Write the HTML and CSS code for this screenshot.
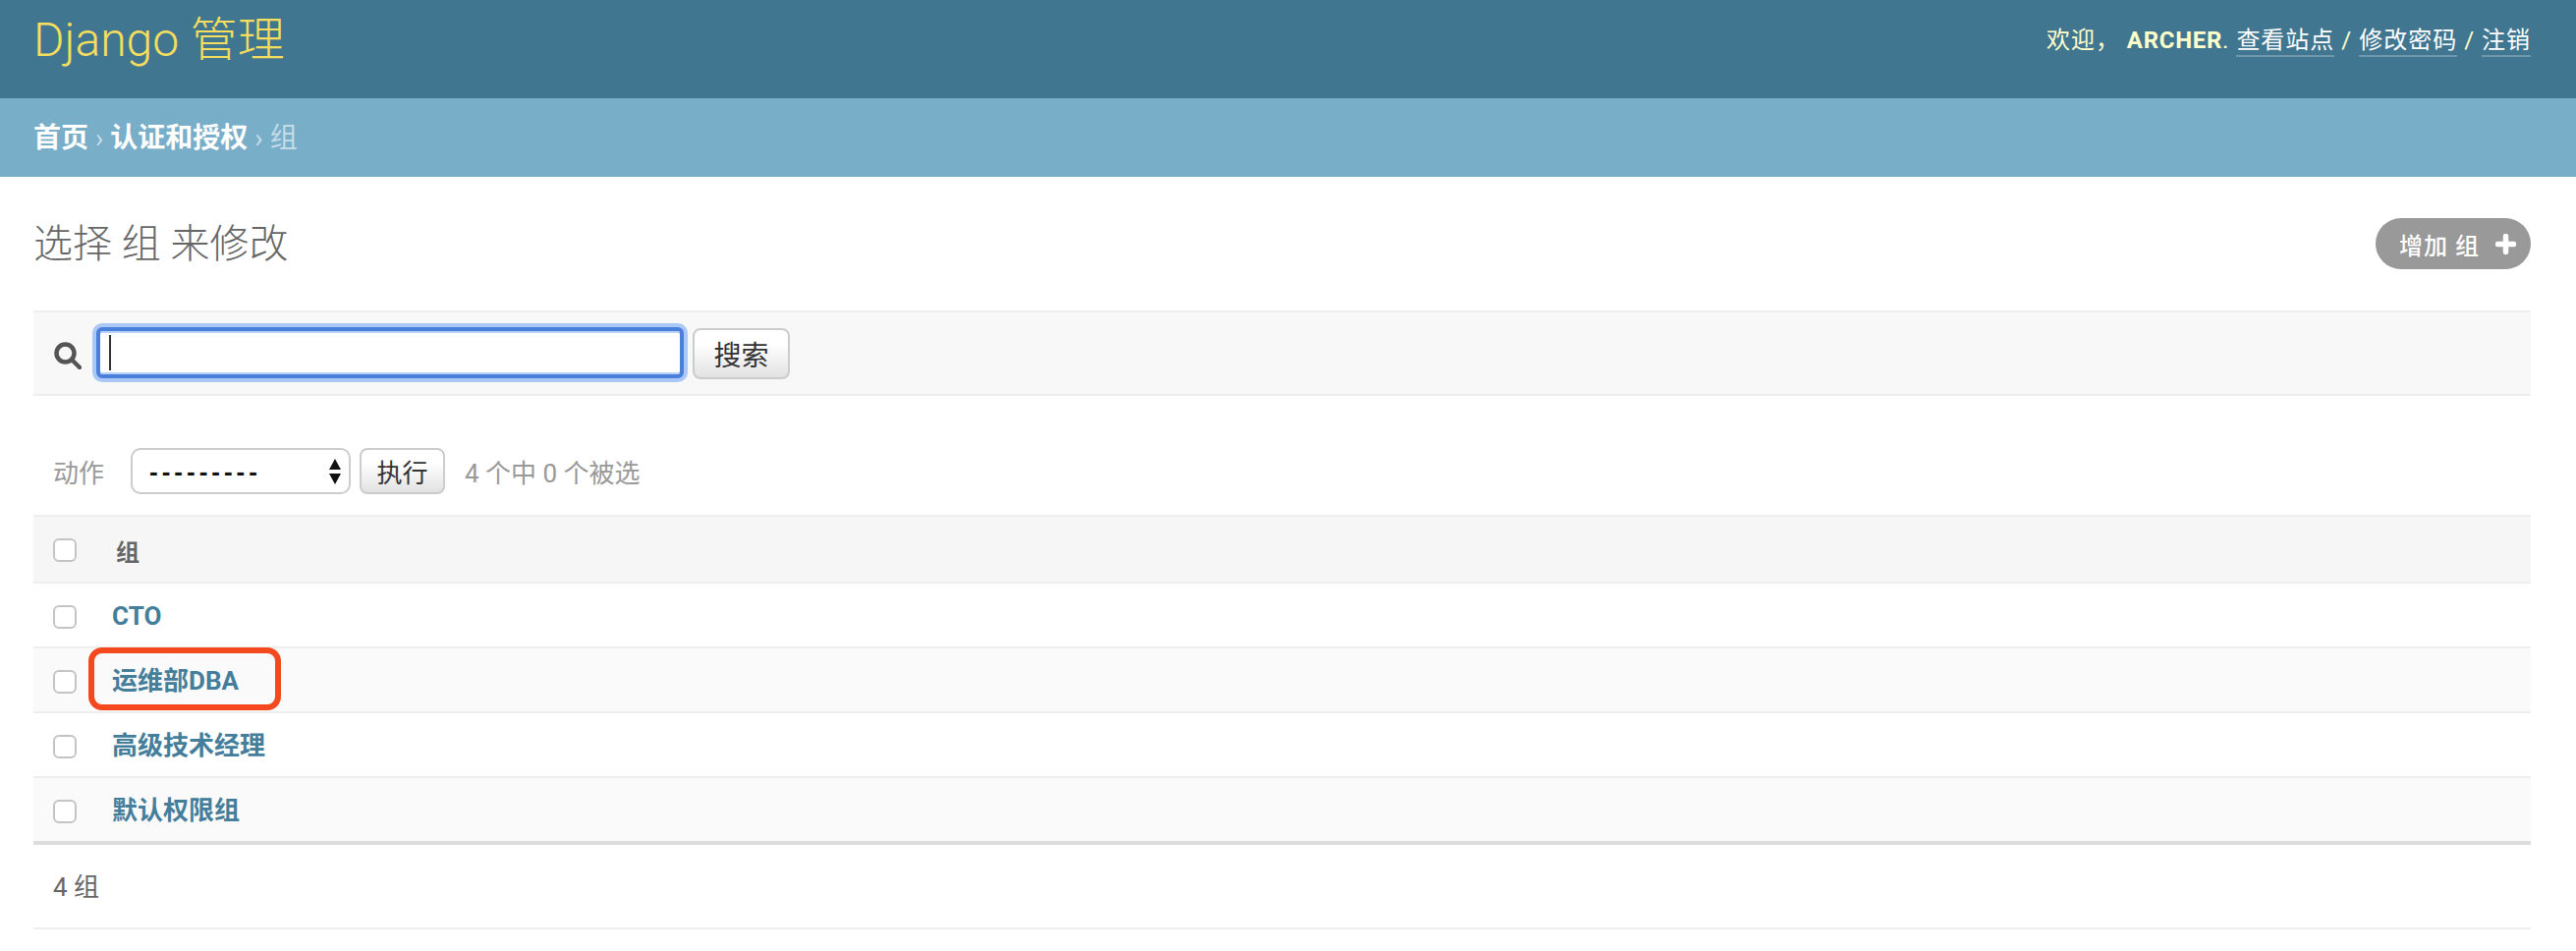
FILE: index.html
```html
<!DOCTYPE html>
<html lang="zh-CN">
<head>
<meta charset="utf-8">
<title>选择 组 来修改</title>
<link rel="stylesheet" href="styles.css">
</head>
<body>
<header class="site-header">
  <h1 class="branding">Django 管理</h1>
  <div class="user-tools">欢迎， <strong class="username">ARCHER</strong>. <a href="#">查看站点</a> / <a href="#">修改密码</a> / <a href="#">注销</a></div>
</header>
<nav class="breadcrumbs"><a href="#">首页</a> › <a href="#">认证和授权</a> › 组</nav>
<main class="content">
  <div class="title-row">
    <h2 class="page-title">选择 组 来修改</h2>
    <a class="add-btn" href="#">增加 组
      <svg class="add-icon" viewBox="0 0 21 21" width="21" height="21" aria-hidden="true"><path d="M10.5 2.5v16M2.5 10.500h16" stroke="#fff" stroke-width="5.500" stroke-linecap="round" fill="none"/></svg>
    </a>
  </div>
  <form class="toolbar">
    <svg class="search-icon" viewBox="0 0 28 28" width="28" height="28" aria-hidden="true"><circle cx="11.500" cy="11.500" r="9" fill="none" stroke="#555" stroke-width="4.500"/><path d="M18 18l8 8" stroke="#555" stroke-width="4.500" stroke-linecap="round"/></svg>
    <input class="search-input" type="text">
    <button class="btn search-btn" type="button">搜索</button>
  </form>
  <div class="actions">
    <span class="action-label">动作</span>
    <span class="select-wrap">
      <select class="action-select"><option>---------</option></select>
      <svg class="select-arrows" viewBox="0 0 14 26" width="14" height="26" aria-hidden="true"><path d="M7 0l6 11H1zM7 26L1 15h12z" fill="#111"/></svg>
    </span>
    <button class="btn run-btn" type="button">执行</button>
    <span class="selected-count">4 个中 0 个被选</span>
  </div>
  <table class="results">
    <thead>
      <tr><th class="check-col"><span class="check"></span></th><th class="name-col">组</th></tr>
    </thead>
    <tbody>
      <tr><td class="check-col"><span class="check"></span></td><td class="name-cell"><a href="#">CTO</a></td></tr>
      <tr class="alt"><td class="check-col"><span class="check"></span></td><td class="name-cell"><span class="annotated"><a href="#">运维部DBA</a><span class="callout"></span></span></td></tr>
      <tr><td class="check-col"><span class="check"></span></td><td class="name-cell"><a href="#">高级技术经理</a></td></tr>
      <tr class="alt last"><td class="check-col"><span class="check"></span></td><td class="name-cell"><a href="#">默认权限组</a></td></tr>
    </tbody>
  </table>
  <p class="paginator">4 组</p>
</main>
</body>
</html>
```
FILE: styles.css
```css
* { box-sizing: border-box; }
html, body { margin: 0; padding: 0; background: #fff; }
body { font-family: Roboto, "Noto Sans CJK SC", sans-serif; color: #333; }
a { text-decoration: none; }

.site-header {
  height: 100px;
  background: #417690;
  display: flex;
  justify-content: space-between;
  align-items: flex-start;
  padding: 13px 46px 0 34px;
}
.branding {
  margin: 0;
  font-size: 48px;
  line-height: 56px;
  font-weight: 300;
  color: #f5dd5d;
}
.user-tools {
  font-size: 24px;
  line-height: 30px;
  margin-top: 13px;
  letter-spacing: 1px;
  color: #ffc;
}
.username { font-weight: 700; letter-spacing: .7px; }
.user-tools a {
  color: #fff;
  border-bottom: 2px solid rgba(255, 255, 255, .25);
  padding-bottom: 1px;
}

.breadcrumbs {
  height: 80px;
  background: #79aec8;
  padding: 2px 46px 0 34px;
  font-size: 28px;
  line-height: 78px;
  color: #c4dce8;
}
.breadcrumbs a { color: #fff; font-weight: 700; }

.content { padding: 42px 46px 0 34px; }
.title-row {
  display: flex;
  justify-content: space-between;
  align-items: center;
  height: 52px;
}
.page-title {
  margin: 0;
  padding-bottom: 6px;
  font-size: 40px;
  font-weight: 300;
  color: #666;
}
.add-btn {
  width: 158px;
  height: 52px;
  border-radius: 26px;
  background: #999;
  color: #fff;
  display: flex;
  align-items: center;
  padding-left: 24px;
  font-size: 24px;
  font-weight: 500;
  letter-spacing: 1px;
}
.add-icon { margin-left: 16px; }

.toolbar {
  margin-top: 42px;
  height: 87px;
  background: #f8f8f8;
  border-top: 2px solid #eee;
  border-bottom: 2px solid #eee;
  display: flex;
  align-items: center;
  padding-left: 21px;
}
.search-icon { margin-top: 4px; }
.search-input {
  width: 598px;
  height: 52px;
  margin: 0 0 1px 15px;
  border: 4px solid #4a80dc;
  border-radius: 6px;
  box-shadow: 0 0 0 4px #a9c8f5, inset 0 2px 0 #b9d2f5, inset 0 -2px 0 #b9d2f5;
  background: #fff linear-gradient(#333, #333) 9px center / 2px 36px no-repeat;
  outline: none;
}
.btn {
  font-family: inherit;
  font-size: 26px;
  color: #333;
  border: 2px solid #ccc;
  border-radius: 8px;
  background: linear-gradient(#fff 30%, #e2e2e2);
  padding: 0;
}
.search-btn { width: 99px; height: 52px; margin-left: 9px; font-size: 28px; }

.actions {
  margin-top: 53px;
  height: 47px;
  display: flex;
  align-items: center;
  padding-left: 20px;
  font-size: 26px;
  color: #999;
}
.action-label { width: 79px; }
.select-wrap { position: relative; display: block; width: 224px; height: 47px; }
.action-select {
  appearance: none;
  width: 100%;
  height: 100%;
  border: 2px solid #ccc;
  border-radius: 10px;
  background: #fff;
  padding: 0 0 0 17px;
  font-family: "Liberation Sans", sans-serif;
  font-size: 26px;
  font-weight: 700;
  letter-spacing: 4px;
  color: #111;
}
.select-arrows { position: absolute; right: 9px; top: 11px; }
.run-btn { width: 87px; height: 47px; margin-left: 9px; }
.selected-count { margin-left: 20px; }

.results {
  width: 100%;
  margin-top: 21px;
  border-collapse: separate;
  border-spacing: 0;
}
.results th {
  height: 70px;
  background: #f6f6f6;
  border-top: 2px solid #eee;
  border-bottom: 2px solid #eee;
  padding: 2px 0 0;
  text-align: left;
}
.results td {
  height: 66px;
  border-bottom: 2px solid #eee;
  padding: 0;
}
.results td.check-col { padding-top: 4px; }
.results td.name-cell { padding-top: 2px; }
.results .alt td { background: #fafafa; }
.results .last td { height: 68px; border-bottom: 4px solid #ddd; }
.check-col { width: 80px; padding-left: 20px !important; }
.check {
  display: block;
  width: 24px;
  height: 24px;
  background: #fff;
  border: 2px solid #c4c4c4;
  border-radius: 6px;
}
.name-col {
  font-size: 24px;
  font-weight: 700;
  color: #666;
  padding-left: 4px !important;
}
.name-cell { font-size: 26px; font-weight: 700; line-height: 32px; }
.name-cell a { color: #447e9b; }
.annotated { position: relative; display: inline-block; }
.callout {
  position: absolute;
  left: -24px;
  top: -18px;
  width: 196px;
  height: 64px;
  border: 6px solid #f4481f;
  border-radius: 14px;
}
.paginator {
  margin: 0;
  height: 86px;
  padding-left: 20px;
  font-size: 26px;
  line-height: 86px;
  color: #666;
  border-bottom: 2px solid #eee;
}
```
